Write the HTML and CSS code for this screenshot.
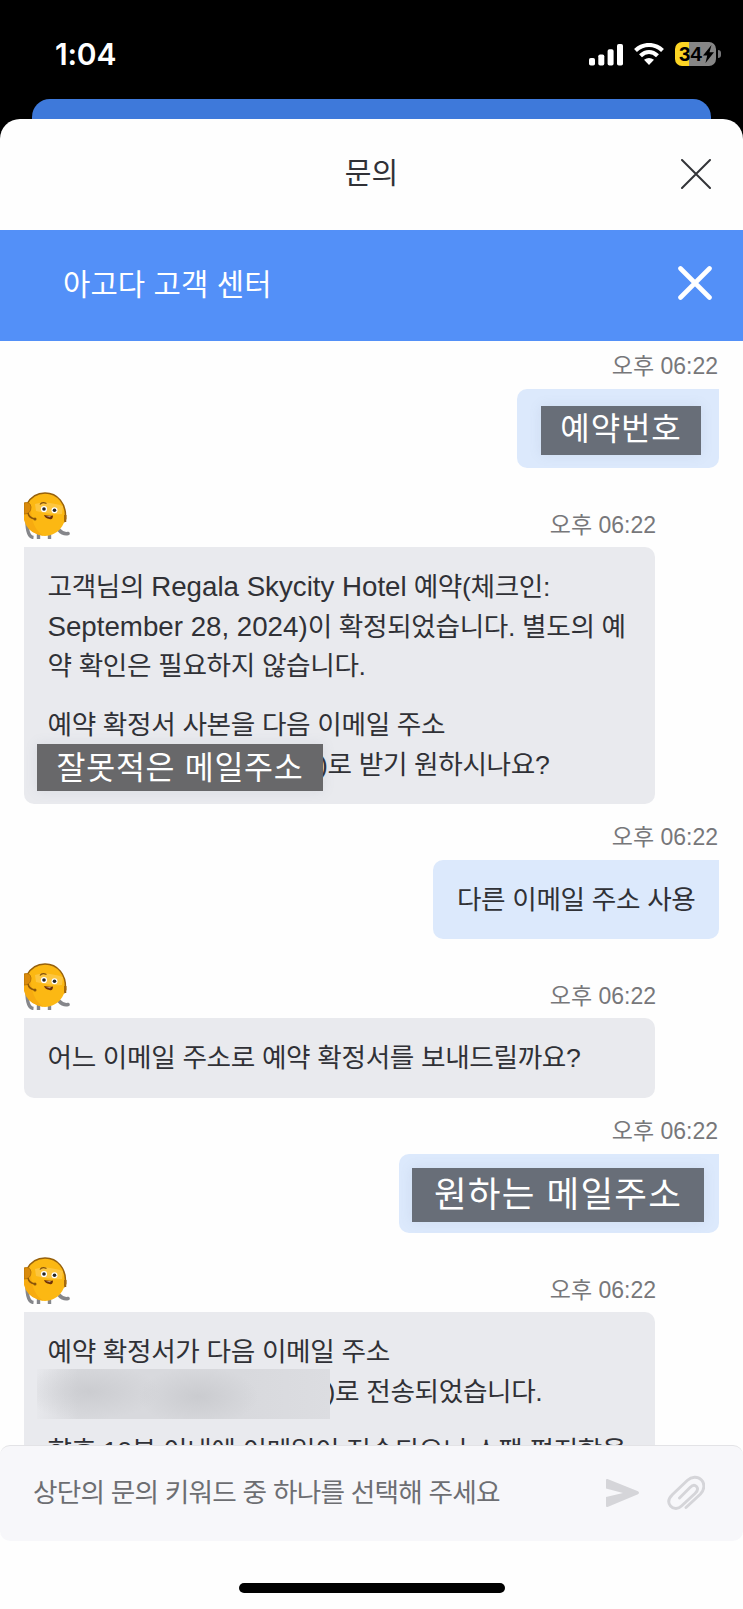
FILE: index.html
```html
<!DOCTYPE html>
<html lang="ko">
<head>
<meta charset="utf-8">
<title>문의</title>
<link rel="stylesheet" href="styles.css">
</head>
<body>
<svg class="defs" width="0" height="0">
  <symbol id="mascot" viewBox="0 0 46 47">
    <path d="M3 29Q3 45 9.500 45.500M14.500 42V47M25.500 42V47" fill="none" stroke="#85868a" stroke-width="3.400"/>
    <path d="M35 38Q39 42.500 44 41.500" fill="none" stroke="#85868a" stroke-width="3.600" stroke-linecap="round"/>
    <ellipse cx="21" cy="22.500" rx="20.500" ry="21.500" fill="#fcb813"/>
    <path d="M0 12V28Q3 39 13 42L20 44Q6 36 7 12Z" fill="#f7ab10"/>
    <path d="M11 12Q21 8 39 14L38 22Q25 23 12 19Z" fill="#fdc63f"/>
    <path d="M3 12Q9 1 21 1C34 1 42 12 41.500 25V30" fill="none" stroke="#96600b" stroke-width="1.500"/>
    <path d="M40 23H42.500V27L40 31Z" fill="#a5690c"/>
    <path d="M0 11Q6 9 7 15Q7 22 0 22Z" fill="#d98a0b" stroke="#b97508"/>
    <path d="M4 21Q5 26 11 27" fill="none" stroke="#8b560a" stroke-width="1.500"/>
    <circle cx="11" cy="27" r="1.500" fill="#8b560a"/>
    <circle cx="20" cy="17" r="3.100" fill="#fff"/><circle cx="30.500" cy="18.200" r="3" fill="#fff"/>
    <circle cx="20" cy="17" r="1.800" fill="#252525"/><circle cx="30.500" cy="18.200" r="1.800" fill="#252525"/>
    <path d="M16 12.500Q18 9.500 22.500 11.500" fill="none" stroke="#82500b" stroke-width="1.200"/>
    <path d="M20 23Q24.500 24.200 29 23.500Q29 28 25.500 27Q21 26.500 20 23Z" fill="#6d3008"/>
    <path d="M22 24.200L27 24.500L26 25.300Z" fill="#f6e3c0"/>
  </symbol>
</svg>
<div class="phone">
  <header class="status">
    <span class="clock">1:04</span>
    <div class="indicators">
      <svg class="signal" width="34" height="22" viewBox="0 0 34 22" fill="#fff"><rect x="0" y="14" width="6" height="7.500" rx="1.800"/><rect x="9.300" y="10.500" width="6" height="11" rx="1.800"/><rect x="18.600" y="5.300" width="6" height="16.200" rx="1.800"/><rect x="28" y="0" width="6" height="21.500" rx="1.800"/></svg>
      <svg class="wifi" width="30" height="22" viewBox="0 0 30 22"><path d="M1.500 7.500Q7.500 2 15 2T28.500 7.500M6.500 12.800Q10.500 9 15 9T23.500 12.800" fill="none" stroke="#fff" stroke-width="4.200"/><path d="M10 16.800Q15 13 20 16.800L15 22Z" fill="#fff"/></svg>
      <div class="battery"><span class="level">34</span><svg width="11" height="18" viewBox="0 0 11 18"><path d="M8.500 0L0 10.500H4.200L2.500 18L11 7.300H6.500Z" fill="#000"/></svg></div>
      <i class="nub"></i>
    </div>
  </header>
  <div class="behind"></div>
  <main class="sheet">
    <div class="titlebar">
      <h1>문의</h1>
      <svg class="close" width="30" height="30" viewBox="0 0 30 30"><path d="M1 1L29 29M29 1L1 29" stroke="#333438" stroke-width="2" stroke-linecap="round"/></svg>
    </div>
    <div class="center">
      <h2>아고다 고객 센터</h2>
      <svg width="34" height="34" viewBox="0 0 34 34"><path d="M2.500 2.500L31.500 31.500M31.500 2.500L2.500 31.500" stroke="#fff" stroke-width="4.600" stroke-linecap="round"/></svg>
    </div>
    <section class="chat">
      <div class="user first">
        <time>오후 06:22</time>
        <div class="bubble w-number"><span class="mask mask-number">예약번호</span></div>
      </div>
      <div class="bot">
        <div class="head"><svg class="avatar"><use href="#mascot"/></svg><time>오후 06:22</time></div>
        <div class="bubble">
          <p>고객님의 <span class="latin">Regala Skycity Hotel</span> 예약(체크인:<br><span class="latin">September 28, 2024)</span>이 확정되었습니다. 별도의 예<br>약 확인은 필요하지 않습니다.</p>
          <p>예약 확정서 사본을 다음 이메일 주소<br><span class="after-mask">)로 받기 원하시나요?</span></p>
          <span class="mask mask-wrong">잘못적은 메일주소</span>
        </div>
      </div>
      <div class="user">
        <time>오후 06:22</time>
        <div class="bubble">다른 이메일 주소 사용</div>
      </div>
      <div class="bot">
        <div class="head"><svg class="avatar"><use href="#mascot"/></svg><time>오후 06:22</time></div>
        <div class="bubble"><p>어느 이메일 주소로 예약 확정서를 보내드릴까요?</p></div>
      </div>
      <div class="user">
        <time>오후 06:22</time>
        <div class="bubble w-mail"><span class="mask mask-mail">원하는 메일주소</span></div>
      </div>
      <div class="bot">
        <div class="head"><svg class="avatar"><use href="#mascot"/></svg><time>오후 06:22</time></div>
        <div class="bubble">
          <p>예약 확정서가 다음 이메일 주소<br><span class="after-blur">)로 전송되었습니다.</span></p>
          <p>향후 10분 이내에 이메일이 전송되오니 스팸 편지함을</p>
          <span class="blurred"></span>
        </div>
      </div>
    </section>
    <footer class="composer">
      <span class="hint">상단의 문의 키워드 중 하나를 선택해 주세요</span>
      <svg class="send" width="34" height="30" viewBox="0 0 34 30"><path d="M1.500 1L32 13.300Q34 14.800 32 16.300L1.500 29Q0 29.300 0 28V19L17 15L0 10.500V2Q0 .5 1.500 1Z" fill="#d5d5d9"/></svg>
      <svg class="clip" width="38" height="35" viewBox="0 0 38 35"><path d="M18.500 32L33 18.500C37 14.500 37.500 8 34 4.500C30 .5 24 1 20 4.800L5 19C1 23 0 27 3 30.500C6 34 11 33.500 14 30.500L27.500 18C30 15.500 31 13 29 11C27 9 24.500 10 22.500 12L12 22.500" transform="translate(.5 .5)" fill="none" stroke="#d5d5d9" stroke-width="2.900" stroke-linecap="round"/></svg>
    </footer>
    <div class="home"><i></i></div>
  </main>
</div>
</body>
</html>
```
FILE: styles.css
```css
* { box-sizing: border-box; }
body { margin: 0; background: #000; font-family: "Liberation Sans", "Noto Sans CJK KR", sans-serif; color: #303136; }
svg { display: block; flex: none; }
h1, h2, p { margin: 0; font-weight: 400; }
.defs { position: absolute; }
.phone { width: 743px; height: 1609px; overflow: hidden; background: #000; display: flex; flex-direction: column; }

.status { height: 99px; flex: none; display: flex; justify-content: space-between; padding: 42px 22px 0 55px; color: #fff; }
.clock { font: 600 30px/25px Inter, sans-serif; letter-spacing: -.2px; }
.indicators { display: flex; height: 24px; }
.signal { margin-top: 2px; }
.wifi { margin: 1px 0 0 11px; }
.battery { width: 41px; height: 24px; margin-left: 11px; border-radius: 7px; background: linear-gradient(90deg, #fcd524 14px, #868686 14px); display: flex; align-items: center; gap: 1px; padding-left: 4px; color: #000; }
.level { font: 700 20.500px/24px "Liberation Sans", sans-serif; }
.nub { width: 3px; height: 8px; margin: 8px 0 0 2px; border-radius: 0 4px 4px 0; background: #77777a; }
.behind { height: 20px; flex: none; margin: 0 32px; border-radius: 18px 18px 0 0; background: #3e79da; }

.sheet { flex: 1; min-height: 0; display: flex; flex-direction: column; background: #fefefe; border-radius: 20px 20px 0 0; overflow: hidden; }
.titlebar { height: 111px; flex: none; display: grid; grid-template-columns: 1fr auto 1fr; align-items: center; padding: 0 32px 1px; }
.titlebar h1 { grid-column: 2; font-size: 29px; line-height: 40px; }
.close { justify-self: end; }
.center { height: 111px; flex: none; display: flex; align-items: center; justify-content: space-between; padding: 0 31px 5px 63px; background: #5390f8; color: #fff; }
.center h2 { padding-top: 4px; font-size: 29.700px; line-height: 40px; letter-spacing: .1px; }

.chat { height: 1104px; flex: none; padding: 0 24px; overflow: hidden; font-size: 26.670px; line-height: 39.600px; letter-spacing: -.36px; }
.latin { font-size: 27.700px; line-height: 1; letter-spacing: 0; }
time { color: #77777a; font-size: 23px; letter-spacing: 0; white-space: nowrap; }
.user { display: flex; flex-direction: column; align-items: flex-end; padding-top: 10.500px; }
.user.first { padding-top: 2.500px; }
.user time { line-height: 45px; padding-right: 1px; }
.bubble { position: relative; border-radius: 10px; padding: 21px 23.500px 19px; white-space: nowrap; }
.user .bubble { height: 79.500px; background: #dce9fc; border-top-right-radius: 0; }
.user .w-number { width: 202px; }
.user .w-mail { width: 320px; }
.bot { padding-top: 24px; width: 632px; }
.head { height: 47px; display: flex; justify-content: space-between; align-items: flex-end; }
.head time { line-height: 28px; }
.avatar { width: 46px; height: 47px; }
.bot .bubble { width: 631px; margin-top: 8px; background: #e9eaee; border-top-left-radius: 0; }
.bubble p + p { margin-top: 19.500px; }
.after-mask { padding-left: 271.500px; }
.after-blur { padding-left: 279px; }

.mask { position: absolute; color: #fff; background: #686e78; text-align: center; font-size: 32px; letter-spacing: .7px; box-shadow: 0 0 12px rgba(105, 120, 150, .12); }
.mask-number { left: 24px; top: 17px; width: 160px; height: 49px; line-height: 46px; letter-spacing: .9px; }
.mask-wrong { left: 13px; top: 197px; width: 286px; height: 47px; line-height: 48px; font-size: 31.500px; background: #68686a; }
.mask-mail { left: 13px; top: 14px; width: 292px; height: 54px; line-height: 54px; font-size: 35.500px; letter-spacing: 1.200px; }
.blurred { position: absolute; left: 13px; top: 57px; width: 293px; height: 50px; background: radial-gradient(ellipse 60px 30px at 55% 55%, rgba(193, 194, 198, .6), transparent), radial-gradient(ellipse 70px 28px at 18% 45%, rgba(195, 196, 200, .6), transparent), linear-gradient(90deg, #e7e8ec, #d8d9dd 14%, #d8d9dd 70%, #dcdde1); }

.composer { height: 96px; flex: none; display: flex; align-items: center; padding: 0 38px 2px 33px; background: #f7f7fa; border-top: 1px solid #e3e3e6; border-radius: 10px; }
.hint { flex: 1; padding-bottom: 4px; color: #6d6e72; font-size: 26.670px; letter-spacing: -.8px; white-space: nowrap; }
.clip { margin-left: 27px; }
.home { flex: 1; display: flex; justify-content: center; padding-top: 42px; }
.home i { width: 266px; height: 10px; border-radius: 5px; background: #000; }
```
